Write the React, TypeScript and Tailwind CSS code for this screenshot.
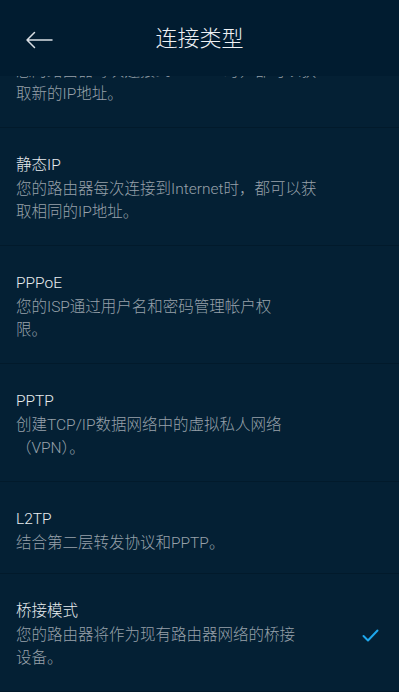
import React from 'react'

type ConnType = {
  title: string
  lines: string[]
  selected?: boolean
}

const types: ConnType[] = [
  {
    title: '动态IP',
    lines: ['您的路由器每次连接到Internet时，都可以获', '取新的IP地址。'],
  },
  {
    title: '静态IP',
    lines: ['您的路由器每次连接到Internet时，都可以获', '取相同的IP地址。'],
  },
  {
    title: 'PPPoE',
    lines: ['您的ISP通过用户名和密码管理帐户权', '限。'],
  },
  {
    title: 'PPTP',
    lines: ['创建TCP/IP数据网络中的虚拟私人网络', '（VPN）。'],
  },
  {
    title: 'L2TP',
    lines: ['结合第二层转发协议和PPTP。'],
  },
  {
    title: '桥接模式',
    lines: ['您的路由器将作为现有路由器网络的桥接', '设备。'],
    selected: true,
  },
]

function BackArrow() {
  return (
    <svg width="28" height="18" viewBox="0 0 28 18" fill="none">
      <path
        d="M27 9H2M9.5 1.5L2 9l7.5 7.5"
        stroke="#d9dee3"
        strokeWidth="1.5"
        strokeLinecap="round"
        strokeLinejoin="round"
      />
    </svg>
  )
}

function Check() {
  return (
    <svg width="17" height="13" viewBox="0 0 17 13" fill="none">
      <path
        d="M1.5 7l4.5 4.5L15.5 1.5"
        stroke="#1ea7ec"
        strokeWidth="2"
        strokeLinecap="round"
        strokeLinejoin="round"
      />
    </svg>
  )
}

export default function App() {
  return (
    <div
      className="h-[692px] w-full overflow-hidden bg-[#042034] flex flex-col font-light"
      style={{ fontFamily: 'Roboto, "Noto Sans CJK SC", sans-serif' }}
    >
      <header className="relative z-10 h-[76px] shrink-0 bg-[#011c30] flex items-center px-[25px]">
        <button className="w-[30px] h-[30px] flex items-center justify-start mt-[4px]">
          <BackArrow />
        </button>
        <h1 className="flex-1 text-center text-[22px] leading-none text-[#eef1f4] mr-[30px] mt-[2px]">
          连接类型
        </h1>
      </header>

      <ul className="-mt-[66px]">
        {types.map((t) => (
          <li
            key={t.title}
            className={`flex items-center border-b border-[#021a2b] pl-4 pr-[20px] pt-[26px] ${
              t.lines.length > 1 ? 'pb-[21px]' : 'pb-[18px]'
            }`}
          >
            <div className="flex-1">
              <div className="text-[15.5px] leading-[22px] text-[#e8ecef]">{t.title}</div>
              <div className="mt-[2px] text-[15.5px] leading-[23px] text-[#97a1aa] whitespace-nowrap">
                {t.lines.map((l, i) => (
                  <div key={i}>{l}</div>
                ))}
              </div>
            </div>
            {t.selected && <Check />}
          </li>
        ))}
      </ul>
    </div>
  )
}
